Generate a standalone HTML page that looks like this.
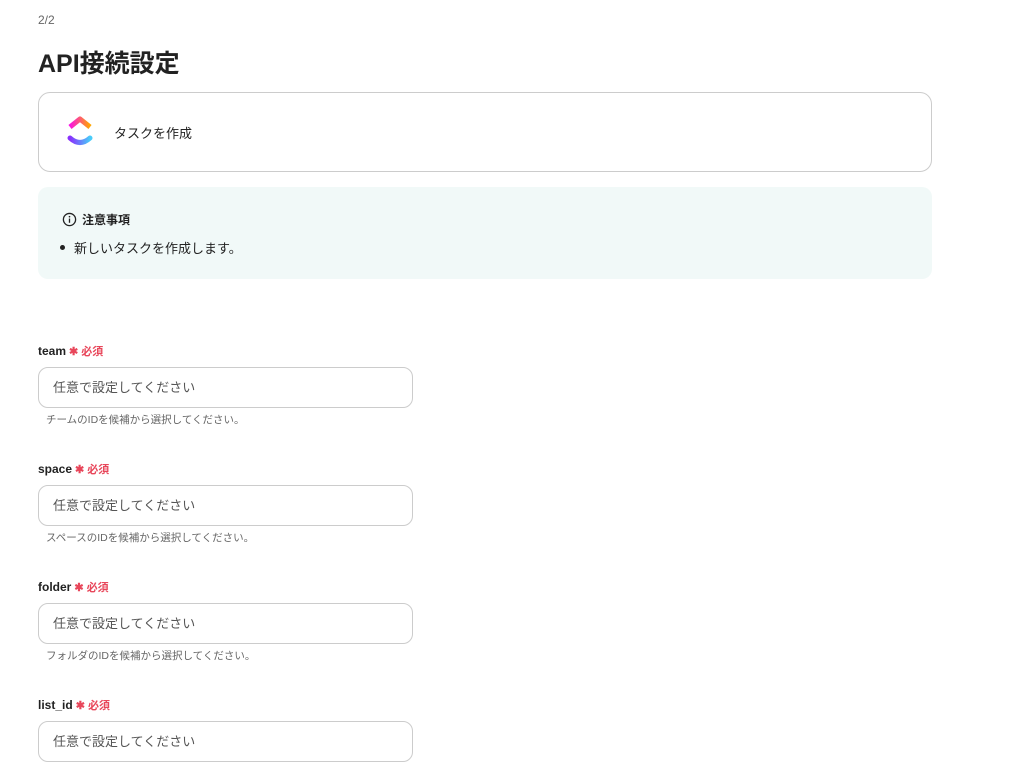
<!DOCTYPE html>
<html><head><meta charset="utf-8"><style>
*{box-sizing:border-box;margin:0;padding:0}
body{width:1016px;height:742px;overflow:hidden;background:#fff;font-family:"Liberation Sans","Noto Sans CJK JP",sans-serif;color:#222;position:relative}
.a{position:absolute}
.step{left:38px;top:13px;font-size:12px;color:#666}
h1{position:absolute;left:38px;top:44px;font-size:25px;font-weight:bold;color:#222}
.card{left:38px;top:92px;width:894px;height:80px;border:1px solid #ccc;border-radius:12px}
.card span{position:absolute;left:75px;top:30px;font-size:13px}
.note{left:38px;top:187px;width:894px;height:92px;background:#f1f9f8;border-radius:10px}
.nt{position:absolute;left:24px;top:24px;font-size:12px;font-weight:bold;display:flex;align-items:center;gap:5px}
.nb{position:absolute;left:22px;top:51px;font-size:13px}
.nb:before{content:"";display:inline-block;width:5px;height:5px;border-radius:50%;background:#222;margin-right:9px;vertical-align:middle;position:relative;top:-2px}
.lab{left:38px;font-size:12px;font-weight:bold;color:#222}
.lab i{font-style:normal;color:#e8465a;font-size:11px;margin-left:3px}
.inp{left:38px;width:375px;height:41px;border:1px solid #ccc;border-radius:10px;font-size:13px;color:#555;padding:9px 0 0 14px}
.help{left:46px;font-size:10.5px;color:#666}
</style></head><body>
<div class="a step">2/2</div>
<h1>API接続設定</h1>
<div class="a card">
<svg class="a" style="left:27px;top:22px" width="28" height="34" viewBox="0 0 28 34">
<defs><linearGradient id="g1" x1="0" y1="0" x2="1" y2="0"><stop offset="0" stop-color="#fa12e3"/><stop offset="1" stop-color="#ffa600"/></linearGradient>
<linearGradient id="g2" x1="0" y1="0" x2="1" y2="0"><stop offset="0" stop-color="#8930fd"/><stop offset="1" stop-color="#49ccf9"/></linearGradient></defs>
<path d="M4 12 L14 4 L24 12" fill="none" stroke="url(#g1)" stroke-width="5" stroke-linejoin="round"/>
<path d="M4 23 Q14 32 24 23" fill="none" stroke="url(#g2)" stroke-width="5" stroke-linecap="round"/>
</svg>
<span>タスクを作成</span></div>
<div class="a note">
<div class="nt"><svg width="15" height="15" viewBox="0 0 16 16"><circle cx="8" cy="8" r="6.5" fill="none" stroke="#222" stroke-width="1.4"/><rect x="7.3" y="7" width="1.4" height="4.5" fill="#222"/><circle cx="8" cy="5" r="0.9" fill="#222"/></svg>注意事項</div>
<div class="nb">新しいタスクを作成します。</div>
</div>
<div class="a lab" style="top:343px">team<i>✱ 必須</i></div>
<div class="a inp" style="top:367px">任意で設定してください</div>
<div class="a help" style="top:412px">チームのIDを候補から選択してください。</div>
<div class="a lab" style="top:461px">space<i>✱ 必須</i></div>
<div class="a inp" style="top:485px">任意で設定してください</div>
<div class="a help" style="top:530px">スペースのIDを候補から選択してください。</div>
<div class="a lab" style="top:579px">folder<i>✱ 必須</i></div>
<div class="a inp" style="top:603px">任意で設定してください</div>
<div class="a help" style="top:648px">フォルダのIDを候補から選択してください。</div>
<div class="a lab" style="top:697px">list_id<i>✱ 必須</i></div>
<div class="a inp" style="top:721px">任意で設定してください</div>
</body></html>
